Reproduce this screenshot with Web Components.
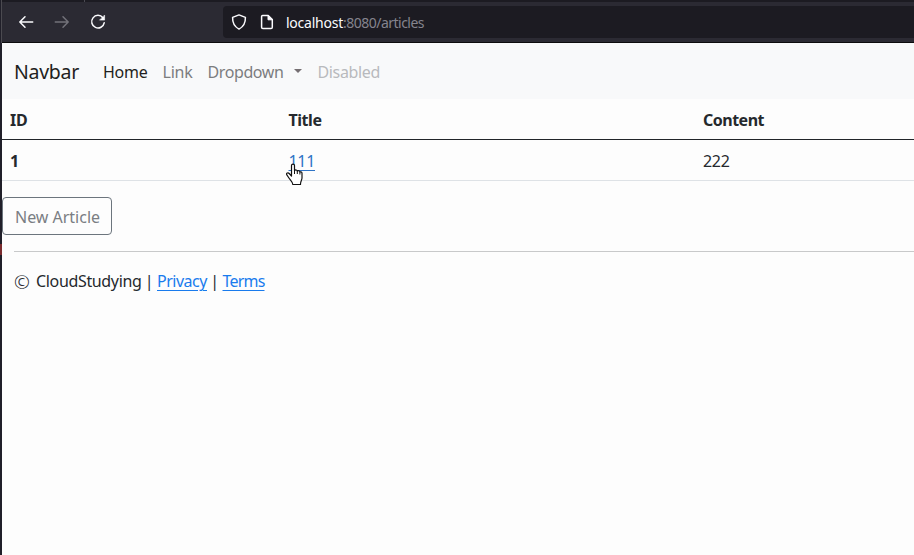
<!DOCTYPE html>
<html lang="en">
<head>
<meta charset="utf-8">
<title>Articles</title>
<style>
html,body{margin:0;height:100%;overflow:hidden}
body{font:400 16px/24px "Noto Sans","Open Sans",sans-serif;color:#25292d;background:#fdfdfd}
</style>
</head>
<body>
<article-app></article-app>
<script>
class BaseElement extends HTMLElement {
  constructor() {
    super();
    this.attachShadow({ mode: 'open' }).innerHTML = this.constructor.markup;
  }
}

/* Text run set to a given advance width through its letter spacing. */
class FitText extends BaseElement {
  static markup = `<style>:host{display:inline-block;white-space:nowrap;flex:none}span{display:inline-block}
  :host(.u) span{text-decoration:underline;text-decoration-thickness:1px;text-underline-offset:3px}</style><span><slot></slot></span>`;
  connectedCallback() {
    const want = parseFloat(this.getAttribute('w'));
    const n = this.textContent.length;
    const span = this.shadowRoot.querySelector('span');
    const have = span.getBoundingClientRect().width;
    span.style.letterSpacing = ((want - have) / n) + 'px';
    this.style.width = want + 'px';
  }
}

class BrowserBar extends BaseElement {
  static markup = `<style>
  :host{display:flex;flex-direction:column;height:43px;box-sizing:border-box;background:#2b2a33;border-bottom:1px solid #0c0c0d;color:#fbfbfe}
  .tabs{height:2px;background:#1c1b22;display:flex;padding-left:82px}
  .tabs i{width:1px;background:#4a4a52}
  .tools{flex:1;display:flex;align-items:center;padding-left:16px}
  svg{display:block;flex:none;fill:none;stroke:#fbfbfe;stroke-width:1.5;stroke-linecap:round;stroke-linejoin:round}
  .nav{display:flex;gap:20px;width:205px}
  .url{flex:1;display:flex;align-items:center;height:32px;background:#1c1b22;border-radius:4px 0 0 4px;padding-left:8px;font-size:14px;line-height:20px}
  .page{margin:0 11px 0 12px}
  fit-text{margin-top:2px}
  .dim{color:#85848e}
  </style>
  <div class="tabs"><i></i></div>
  <div class="tools">
    <div class="nav">
      <svg width="16" height="16"><path d="M14.7 8H1.8M7 2.8 1.8 8 7 13.2"/></svg>
      <svg width="16" height="16" style="stroke:#73727a"><path d="M1.3 8h12.9M9 2.8 14.2 8 9 13.2"/></svg>
      <svg width="16" height="16"><path d="M12.9 3.7A6.3 6.3 0 1 0 14.2 8.8"/><path d="M14.6 1.4v4.7H9.9z" fill="#fbfbfe" stroke-width=".6"/></svg>
    </div>
    <div class="url">
      <svg width="16" height="16"><path d="M8 .9 14.4 3.4C14.6 8.600 12.600 12.700 8 15.100 3.400 12.700 1.400 8.600 1.600 3.400Z"/></svg>
      <svg class="page" width="16" height="16"><path d="M3.600 1.500H9.200L13.300 5.600V13.200Q13.300 14.500 12 14.500H3.900Q2.600 14.500 2.600 13.200V2.500Q2.600 1.500 3.600 1.500Z"/><path d="M9 1.500V5.800H13.300Z" fill="#fbfbfe" stroke-width="1"/></svg>
      <fit-text w="57">localhost</fit-text><fit-text class="dim" w="81">:8080/articles</fit-text>
    </div>
  </div>`;
}

class SiteNav extends BaseElement {
  static markup = `<style>
  :host{display:flex;align-items:center;height:56px;box-sizing:border-box;background:#f8f9fa;padding:2px 0 0 12px;color:#7c7d7f}
  .brand{font-size:19.500px;line-height:30px;color:#1f1f20;margin-right:24px}
  .on{color:#1f1f20}
  .items{display:flex;align-items:center;gap:15px}
  .drop{display:flex;align-items:center;gap:10px}
  .caret{border:4.500px solid transparent;border-top-color:#756f72;border-bottom:0;width:0;margin-top:-2px}
  .off{color:#b8babd;margin-left:1px}
  </style>
  <fit-text class="brand" w="65">Navbar</fit-text>
  <div class="items">
    <fit-text class="on" w="44.5">Home</fit-text>
    <fit-text w="30">Link</fit-text>
    <div class="drop"><fit-text w="76">Dropdown</fit-text><i class="caret"></i></div>
    <fit-text class="off" w="62.5">Disabled</fit-text>
  </div>`;
}

class TextLink extends BaseElement {
  static markup = `<style>
  :host{color:#197bed}
  a{color:inherit;cursor:pointer}
  </style><a><slot></slot></a>`;
}

class ArticleTable extends BaseElement {
  static markup = `<style>
  :host{display:block}
  .row{display:grid;grid-template-columns:278.500px 414.500px 1fr;height:41px;box-sizing:border-box;padding:9px 0 0 8px;border-bottom:1px solid #dee2e6}
  .head{border-bottom-color:#212529;font-weight:700}
  b{font-weight:700}
  .hit{position:relative}
  text-link{color:#2f74c6}
  .hand{position:absolute;left:-3px;top:13px;overflow:visible}
  </style>
  <div class="row head"><fit-text w="17.5">ID</fit-text><fit-text w="33">Title</fit-text><fit-text w="61">Content</fit-text></div>
  <div class="row"><b>1</b><div class="hit"><text-link><fit-text class="u" w="26.5">111</fit-text></text-link>
  <svg class="hand" width="20" height="24"><path d="M6.500 14V3.600C6.500 1.500 9.500 1.500 9.500 3.600V8.500C10.500 7.500 12 8 12.300 9 13.300 8.300 14.600 8.800 14.900 9.900 16.200 9.500 17 10.200 17 11.400V16C17 18 15.500 19 15.500 22.500H7.800C7.500 19.500 5 18 3.600 15.500L1.700 12.700C1 10.900 3.200 10.400 4.200 11.500Z" fill="#fff" stroke="#111" stroke-width="1.200" stroke-linejoin="round" transform="translate(-1 0)"/><path d="M8.500 8.500V12M11.300 9V12M13.900 10V12.500" stroke="#111" fill="none"/></svg></div>
  <fit-text w="26.5">222</fit-text></div>`;
}

class OutlineButton extends BaseElement {
  static markup = `<style>
  :host{display:block}
  button{display:block;box-sizing:border-box;width:110px;height:38px;padding:2px 0 0 12px;border:1px solid #6c757d;border-radius:4px;background:transparent;color:#7a7e83;font:inherit;text-align:left}
  </style><button><slot></slot></button>`;
}

class SiteFooter extends BaseElement {
  static markup = `<style>
  :host{display:block;margin:16px 0 0 12px;border-top:1px solid #c8c9ca;padding-top:17px}
  .line{display:flex;align-items:center;height:24px}
  .bar{width:15.500px;text-align:center}
  .copy{font-size:19px;line-height:24px;font-weight:300;width:22px;margin-top:2px}
  </style>
  <div class="line"><span class="copy">©</span><fit-text w="105.5">CloudStudying</fit-text><span class="bar">|</span><text-link><fit-text class="u" w="50">Privacy</fit-text></text-link><span class="bar">|</span><text-link><fit-text class="u" w="42">Terms</fit-text></text-link></div>`;
}

class ArticleApp extends BaseElement {
  static markup = `<style>
  :host{display:grid;grid-template-columns:2px 1fr;height:555px;background:#fdfdfd}
  .edge{background:linear-gradient(#4b4a50,#4b4a50) 1px 0/1px 43px no-repeat,linear-gradient(#7a2b2e,#7a2b2e) 0 244px/2px 11px no-repeat,#201f29}
  main{min-width:0}
  outline-button{margin-top:16px}
  </style>
  <div class="edge"></div>
  <main><browser-bar></browser-bar><site-nav></site-nav><article-table></article-table><outline-button><fit-text w="85">New Article</fit-text></outline-button><site-footer></site-footer></main>`;
}

/* fit-text goes last so that every run is measured with its final styles. */
customElements.define('article-app', ArticleApp);
customElements.define('browser-bar', BrowserBar);
customElements.define('site-nav', SiteNav);
customElements.define('text-link', TextLink);
customElements.define('article-table', ArticleTable);
customElements.define('outline-button', OutlineButton);
customElements.define('site-footer', SiteFooter);
customElements.define('fit-text', FitText);
</script>
</body>
</html>
